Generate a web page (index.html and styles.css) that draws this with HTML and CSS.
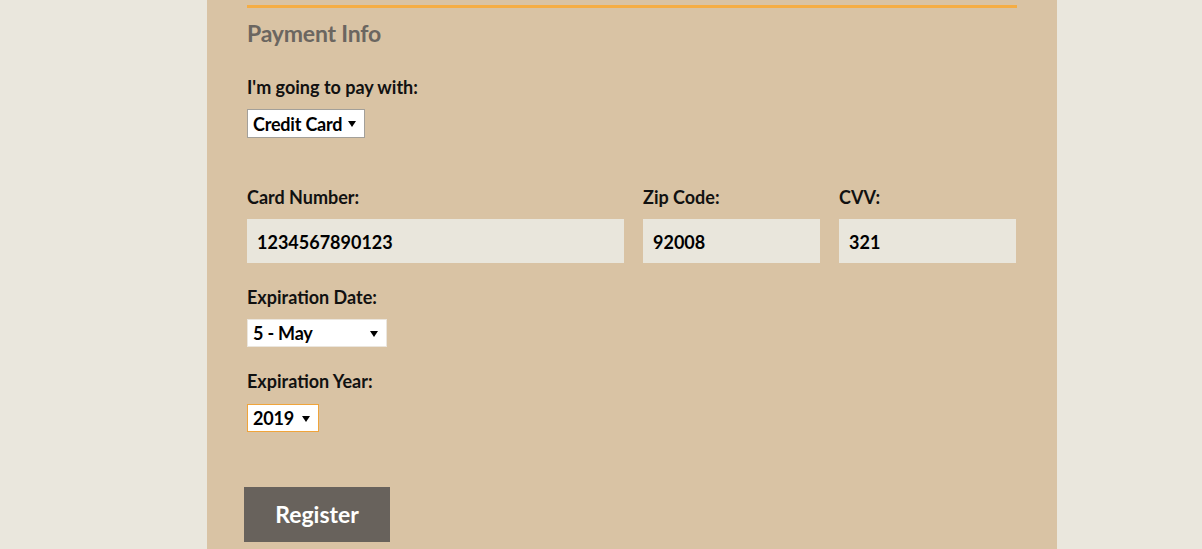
FILE: index.html
```html
<!DOCTYPE html>
<html lang="en">
<head>
<meta charset="utf-8">
<title>Payment Info</title>
<link rel="stylesheet" href="styles.css">
</head>
<body>
<main class="page">
  <form class="form">
    <fieldset class="payment">
      <h2 class="legend">Payment Info</h2>

      <label class="label label-first" for="payment">I'm going to pay with:</label>
      <div class="select-wrap sel-pay">
        <select id="payment" class="select"><option>Credit Card</option><option>PayPal</option><option>Bitcoin</option></select>
        <svg class="caret" width="8" height="6" viewBox="0 0 8 6"><path d="M0 0H8L4 6Z"/></svg>
      </div>

      <div class="card-row">
        <div class="field">
          <label class="label" for="cc-num">Card Number:</label>
          <input class="input" id="cc-num" type="text" value="1234567890123">
        </div>
        <div class="field">
          <label class="label" for="zip">Zip Code:</label>
          <input class="input" id="zip" type="text" value="92008">
        </div>
        <div class="field">
          <label class="label" for="cvv">CVV:</label>
          <input class="input" id="cvv" type="text" value="321">
        </div>
      </div>

      <label class="label label-gap" for="exp-month">Expiration Date:</label>
      <div class="select-wrap sel-month">
        <select id="exp-month" class="select"><option>5 - May</option></select>
        <svg class="caret" width="8" height="6" viewBox="0 0 8 6"><path d="M0 0H8L4 6Z"/></svg>
      </div>

      <label class="label label-gap" for="exp-year">Expiration Year:</label>
      <div class="select-wrap sel-year">
        <select id="exp-year" class="select"><option>2019</option></select>
        <svg class="caret" width="8" height="6" viewBox="0 0 8 6"><path d="M0 0H8L4 6Z"/></svg>
      </div>
    </fieldset>

    <button class="btn" type="submit">Register</button>
  </form>
</main>
</body>
</html>
```

FILE: styles.css
```css
html, body {
  margin: 0;
  padding: 0;
  background: #eae7dd;
  font-family: Lato, "Open Sans", sans-serif;
  color: #111;
}

.page {
  width: 770px;
  margin-left: 207px;
  padding: 5px 40px 0;
  min-height: 544px;
  background: #d9c3a4;
}

.form {
  display: flex;
  flex-direction: column;
  align-items: flex-start;
}

.payment {
  border: 0;
  border-top: 3px solid #f5ad44;
  margin: 0;
  padding: 0;
  width: 770px;
  display: flex;
  flex-direction: column;
  align-items: flex-start;
}

.legend {
  margin: 11px 0 0;
  font-size: 23px;
  line-height: 28px;
  font-weight: 700;
  color: #6b6660;
  letter-spacing: -0.2px;
}

.label {
  display: block;
  font-size: 18px;
  line-height: 22px;
  font-weight: 700;
  color: #111;
  margin-bottom: 11px;
}

.label-first {
  margin-top: 29px;
}

.label-gap {
  margin-top: 23px;
}

.select-wrap {
  position: relative;
  display: flex;
  background: #fff;
  border: 1px solid #a9a9a9;
  box-sizing: border-box;
}

.sel-pay { width: 118px; height: 29px; border-color: #a3a09a; }
.sel-month { width: 140px; height: 28px; border-color: #ebe6de; }
.sel-year { width: 72px; height: 28px; border-color: #f0a43a; margin-top: 1px; }

.select {
  -webkit-appearance: none;
  appearance: none;
  border: 0;
  outline: 0;
  background: transparent;
  width: 100%;
  font-family: inherit;
  font-size: 18px;
  font-weight: 700;
  color: #000;
  letter-spacing: -0.2px;
  padding: 0 0 0 5px;
  margin: 0;
}

.caret {
  position: absolute;
  right: 8px;
  top: 11px;
  fill: #000;
  pointer-events: none;
}

.card-row {
  display: grid;
  grid-template-columns: 377fr 177fr 177fr;
  column-gap: 19px;
  width: 769px;
  margin-top: 48px;
}

.field {
  display: flex;
  flex-direction: column;
}

.input {
  box-sizing: border-box;
  height: 44px;
  width: 100%;
  border: 0;
  margin: 0;
  background: #e9e6dc;
  font-family: inherit;
  font-size: 18px;
  font-weight: 700;
  color: #000;
  padding: 2px 10px 0;
}

.btn {
  margin: 55px 0 0 -3px;
  width: 146px;
  height: 55px;
  border: 0;
  background: #68625c;
  color: #fff;
  font-family: inherit;
  font-size: 23px;
  font-weight: 700;
  padding: 0 0 2px;
}
```
